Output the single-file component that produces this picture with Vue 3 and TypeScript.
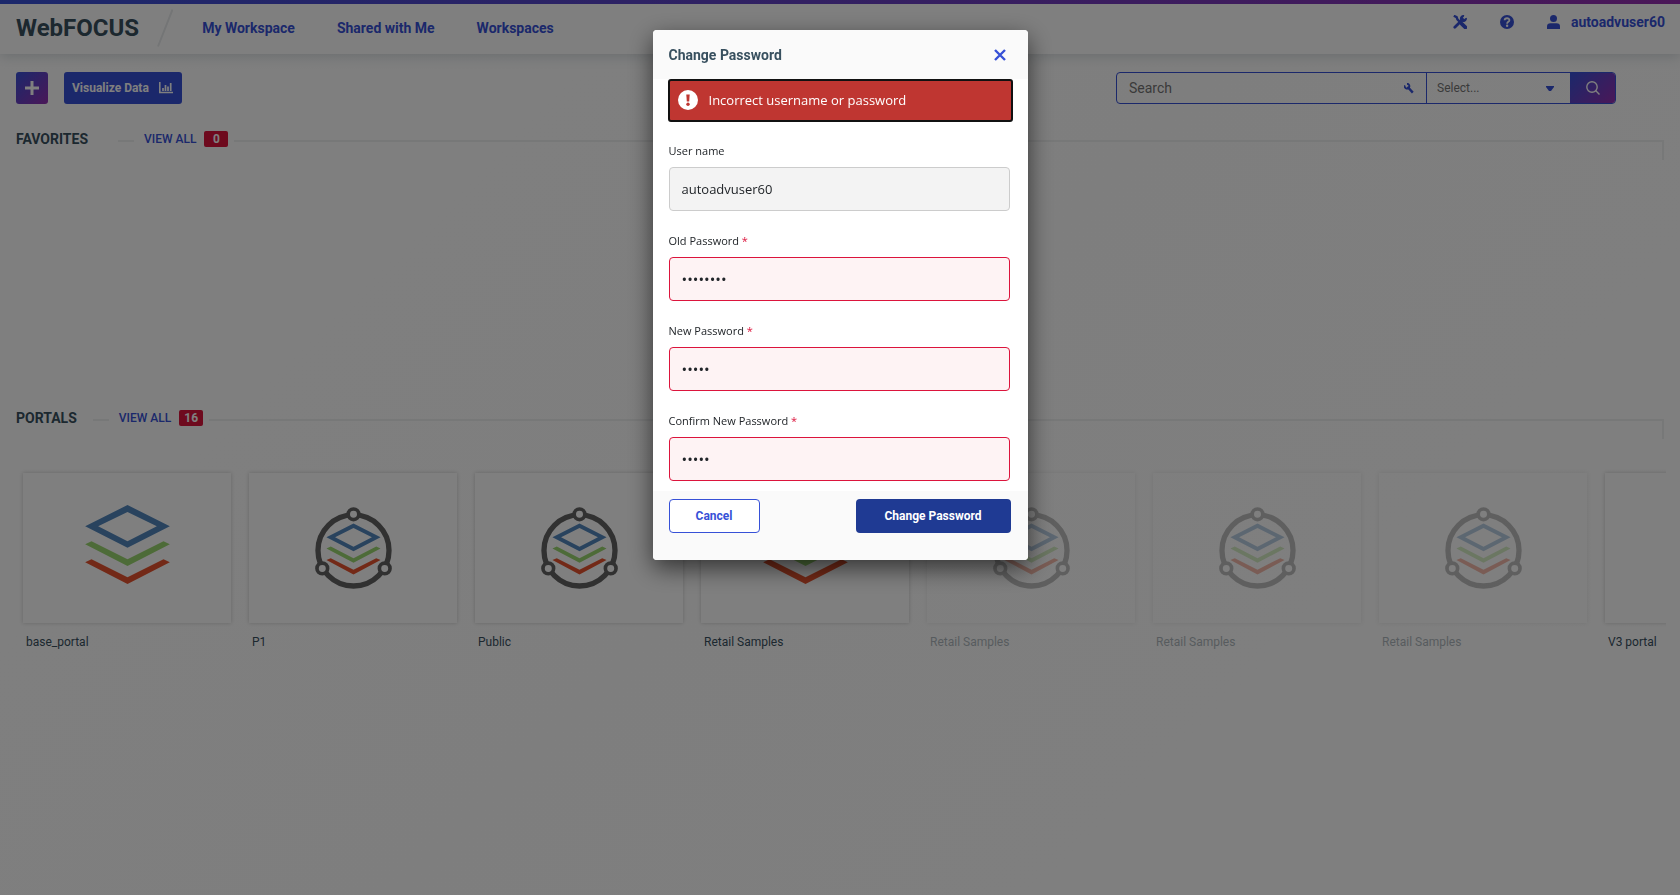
<script setup lang="ts">
import { ref } from 'vue'

interface Portal { name: string; kind: 'layers' | 'ring' | 'none'; dim?: boolean }

const navLinks = ['My Workspace', 'Shared with Me', 'Workspaces']
const portals: Portal[] = [
  { name: 'base_portal', kind: 'layers' },
  { name: 'P1', kind: 'ring' },
  { name: 'Public', kind: 'ring' },
  { name: 'Retail Samples', kind: 'layers' },
  { name: 'Retail Samples', kind: 'ring', dim: true },
  { name: 'Retail Samples', kind: 'ring', dim: true },
  { name: 'Retail Samples', kind: 'ring', dim: true },
  { name: 'V3 portal', kind: 'none' },
]
const userName = ref('autoadvuser60')
const passwords = ref([
  { id: 'old-password', label: 'Old Password', value: 'abcdefgh' },
  { id: 'new-password', label: 'New Password', value: 'abcde' },
  { id: 'confirm-password', label: 'Confirm New Password', value: 'abcde' },
])
</script>

<template>
  <div class="page">
    <header class="header">
      <h1 class="brand">WebFOCUS</h1>
      <svg class="slash" width="16" height="38" viewBox="0 0 16 38"><path d="M1 37.500L15.500 .5" stroke="#e8ebec" stroke-width="2" fill="none" /></svg>
      <nav class="nav">
        <a v-for="link in navLinks" :key="link" href="#">{{ link }}</a>
      </nav>
      <div class="account">
        <button class="plain" aria-label="Settings">
          <svg width="14" height="14" viewBox="0 0 14 14" fill="none" stroke="currentColor">
            <path d="M.8 .8L3.600 2.200L4.400 4.400L6.400 6.400" stroke-width="2.400" />
            <path d="M8.800 8.800L12.400 12.400" stroke-width="3.800" stroke-linecap="round" />
            <path d="M1.800 12.200L9.600 4.400" stroke-width="2.800" stroke-linecap="round" />
            <path d="M13.300 3.500A2.900 2.900 0 1 1 10.500 .7L9.700 3L11 4.300Z" stroke-width="1.200" fill="currentColor" />
            <path d="M13.500 .5L10.600 3.400" stroke="#fff" stroke-width="1.600" />
          </svg>
        </button>
        <button class="plain" aria-label="Help">
          <svg width="14" height="14" viewBox="0 0 14 14">
            <circle cx="7" cy="7" r="7" fill="currentColor" />
            <path d="M4.600 5.300C4.700 2.500 9.500 2.600 9.400 5.200C9.400 6.900 7.100 6.800 7.100 8.700" fill="none" stroke="#fff" stroke-width="1.800" />
            <circle cx="7.100" cy="10.800" r="1.200" fill="#fff" />
          </svg>
        </button>
        <button class="plain user">
          <svg width="13" height="14" viewBox="0 0 13 14" fill="currentColor"><circle cx="6.500" cy="3.500" r="3.500" /><path d="M0 14V11.500Q0 8.300 3.500 8.300H9.500Q13 8.300 13 11.500V14Z" /></svg>
          <span>autoadvuser60</span>
        </button>
      </div>
    </header>

    <main class="main">
      <div class="toolbar">
        <button class="add" aria-label="Add">
          <svg width="14" height="14" viewBox="0 0 14 14"><path d="M7 0V14M0 7H14" stroke="#fff" stroke-width="3" /></svg>
        </button>
        <button class="visualize">
          Visualize Data
          <svg width="14" height="12" viewBox="0 0 14 12" fill="none" stroke="#fff"><path d="M.8 0V10.500H14" stroke-width="1.600" /><path d="M4 9V6M6.500 9V3M9 9V4.500M11.700 9V1" stroke-width="1.700" /></svg>
        </button>
        <form class="search" role="search" @submit.prevent>
          <label class="query">
            <input type="text" placeholder="Search" aria-label="Search" />
            <svg width="10" height="11" viewBox="0 0 10 11"><path d="M3.500 3.800L8.800 9.600" stroke="#3751d7" stroke-width="2.400" fill="none" /><path d="M.8 2.300A2.400 2.400 0 1 0 3 .8" stroke="#3751d7" stroke-width="1.800" fill="none" /></svg>
          </label>
          <label class="scope">
            <select aria-label="Search scope"><option>Select...</option></select>
            <svg width="8" height="5" viewBox="0 0 8 5"><path d="M0 0H8V1L5 5H3L0 1Z" fill="#3751d7" /></svg>
          </label>
          <button class="go" aria-label="Run search">
            <svg width="14" height="14" viewBox="0 0 14 14" fill="none" stroke="#fff" stroke-width="1.400"><circle cx="6" cy="6" r="5.200" /><path d="M9.600 9.600L13.500 13.500" /></svg>
          </button>
        </form>
      </div>

      <section class="favorites">
        <div class="heading">
          <h2>FAVORITES</h2><i class="dash"></i><a href="#">VIEW ALL</a><span class="badge">0</span><i class="rule"></i>
        </div>
      </section>

      <section class="portals">
        <div class="heading">
          <h2>PORTALS</h2><i class="dash"></i><a href="#">VIEW ALL</a><span class="badge">16</span><i class="rule"></i>
        </div>
        <ul class="tiles">
          <li v-for="(p, i) in portals" :key="i" :class="{ dim: p.dim }">
            <div class="tile" :class="p.kind">
              <svg v-if="p.kind === 'layers'" width="85" height="79" viewBox="0 0 254 237">
                <path d="M0 64L127 0L254 64L127 128ZM39 64L127 109L215 64L127 21Z" fill="#5387bd" fill-rule="evenodd" />
                <path d="M0 118L19 109L127 163L235 109L254 118L127 183Z" fill="#9bd770" />
                <path d="M0 172L19 163L127 217L235 163L254 172L127 237Z" fill="#e6532e" />
              </svg>
              <svg v-else-if="p.kind === 'ring'" width="77" height="82" viewBox="0 0 231 247">
                <circle cx="115.500" cy="131" r="107" fill="none" stroke="#636363" stroke-width="16" />
                <g fill="#fff" stroke="#636363" stroke-width="11"><circle cx="115.500" cy="22" r="16" /><circle cx="21.500" cy="185" r="16" /><circle cx="209.500" cy="185" r="16" /></g>
                <path d="M34 91L115.500 50L197 91L115.500 133ZM60 91L115.500 120L171 91L115.500 63Z" fill="#5387bd" fill-rule="evenodd" />
                <path d="M34 125L47 119L115.500 154L184 119L197 125L115.500 168Z" fill="#9bd770" />
                <path d="M34 160L47 154L115.500 189L184 154L197 160L115.500 203Z" fill="#e6532e" />
              </svg>
            </div>
            <span>{{ p.name }}</span>
          </li>
        </ul>
      </section>
    </main>

    <div class="overlay">
      <form class="dialog" role="dialog" aria-labelledby="dialog-title" @submit.prevent>
        <div class="dialog-head">
          <h2 id="dialog-title">Change Password</h2>
          <button type="button" class="plain" aria-label="Close">
            <svg width="12" height="12" viewBox="0 0 12 12"><path d="M1 1L11 11M11 1L1 11" stroke="#3751d7" stroke-width="2.400" /></svg>
          </button>
        </div>
        <div class="dialog-body">
          <div class="alert" role="alert">
            <svg width="20" height="20" viewBox="0 0 20 20"><circle cx="10" cy="10" r="10" fill="#fff" /><path d="M8.300 4.500H11.700L11.200 11.500H8.800Z" fill="#bf3631" /><circle cx="10" cy="14.200" r="1.700" fill="#bf3631" /></svg>
            Incorrect username or password
          </div>
          <div class="field">
            <label for="user-name">User name</label>
            <input id="user-name" v-model="userName" type="text" readonly />
          </div>
          <div v-for="f in passwords" :key="f.id" class="field invalid">
            <label :for="f.id">{{ f.label }} <span>*</span></label>
            <input :id="f.id" v-model="f.value" type="password" />
          </div>
        </div>
        <div class="dialog-foot">
          <button type="button" class="cancel">Cancel</button>
          <button class="submit">Change Password</button>
        </div>
      </form>
    </div>
  </div>
</template>

<style>
body { margin: 0; }
</style>

<style scoped>
* { box-sizing: border-box; }
.page { min-height: 100vh; font-family: Roboto, sans-serif; color: #38505f; background: linear-gradient(135deg, #fff 0%, #fdfdfd 50%, #fff 100%); }
button, input, select { font-family: inherit; }
h1, h2 { margin: 0; }
a { color: #3751d7; text-decoration: none; }
svg { display: block; flex: none; }
.plain { border: 0; padding: 0; background: none; color: #3751d7; display: flex; align-items: center; }

.header { height: 54px; padding: 0 15px 2px 16px; border-top: 4px solid; border-image: linear-gradient(90deg, #3751d7, #952fb0) 1; display: flex; align-items: center; background: #fff; box-shadow: 0 2px 12px rgba(56, 80, 95, .22); }
.brand { font-size: 24px; line-height: 32px; font-weight: 700; color: #38505f; }
.slash { margin-left: 18px; }
.nav { display: flex; gap: 42px; margin-left: 29px; font-size: 14px; line-height: 20px; font-weight: 700; }
.account { margin-left: auto; align-self: flex-start; display: flex; align-items: center; gap: 33px; padding-top: 8px; }
.user { gap: 11px; font-size: 14px; line-height: 20px; font-weight: 700; }

.main { padding: 18px 14px 0 16px; }
.toolbar { display: flex; gap: 16px; }
.add { width: 32px; height: 32px; border: 0; border-radius: 3px; padding: 0; display: flex; align-items: center; justify-content: center; background: linear-gradient(135deg, #3751d7, #952fb0); }
.visualize { height: 32px; border: 0; border-radius: 3px; padding: 0 9px 0 8px; display: flex; align-items: center; gap: 10px; background: #3751d7; color: #fff; font-size: 12px; font-weight: 700; }
.search { margin-left: auto; margin-right: 50px; width: 500px; height: 32px; display: flex; border: 1px solid #3751d7; border-radius: 4px; overflow: hidden; }
.query { flex: 1; display: flex; align-items: center; padding: 0 12px; border-right: 1px solid #3751d7; }
.query input { flex: 1; min-width: 0; border: 0; padding: 0; background: none; font-size: 14px; outline: 0; }
.query input::placeholder { color: #757575; }
.scope { width: 143px; display: flex; align-items: center; padding: 0 16px 0 10px; }
.scope select { flex: 1; appearance: none; border: 0; padding: 0; background: none; color: #757575; font-size: 12px; }
.go { width: 45px; border: 0; display: flex; align-items: center; justify-content: center; background: linear-gradient(135deg, #3751d7, #952fb0); }

.favorites { height: 304px; padding-top: 25px; }
.heading { display: flex; align-items: center; height: 20px; padding-right: 2px; }
.heading h2 { font-size: 14px; line-height: 20px; font-weight: 700; }
.heading a { margin-left: 10px; font-size: 12px; line-height: 20px; font-weight: 500; }
.dash { width: 16px; height: 2px; margin: 4px 0 0 16px; background: #eff0f1; }
.favorites .dash { margin-left: 30px; }
.badge { min-width: 24px; height: 16px; margin-left: 8px; border-radius: 2px; background: #dc143c; color: #fff; font-size: 12px; line-height: 16px; font-weight: 700; text-align: center; }
.rule { flex: 1; align-self: flex-start; height: 20px; margin: 11px 0 0 6px; border: solid #eff0f1; border-width: 2px 2px 0 0; }
.tiles { list-style: none; margin: 0; padding: 45px 0 20px 7px; display: flex; gap: 18px; overflow: hidden; }
.tiles li { flex: none; width: 208px; }
.tile { height: 150px; display: flex; align-items: center; justify-content: center; background: #fff; box-shadow: 0 0 4px rgba(0, 0, 0, .2); }
.tile.layers { padding-bottom: 8px; }
.tiles span { display: block; margin: 9px 0 0 3px; font-size: 12px; line-height: 20px; }
.dim { opacity: .4; }

.overlay { position: fixed; inset: 0; padding-top: 30px; background: rgba(0, 0, 0, .5); display: flex; align-items: flex-start; justify-content: center; }
.dialog { width: 375px; border-radius: 4px; overflow: hidden; background: #fff; box-shadow: 0 8px 24px rgba(0, 0, 0, .6); }
.dialog-head { height: 49px; padding: 0 22px 0 16px; display: flex; align-items: center; justify-content: space-between; background: #fafafa; }
.dialog-head h2 { font-size: 14px; line-height: 20px; }
.dialog-body { padding: 0 15px 10px; font-family: "Open Sans", sans-serif; color: #212529; }
.alert { height: 43px; padding: 0 8px 2px; display: flex; align-items: center; gap: 11px; border: 2px solid #111; border-radius: 3px; background: #bf3631; color: #fff; font-size: 13px; line-height: 20px; }
.field { padding: 0 3px 0 1px; margin-top: 19px; }
.field label { display: block; font-size: 11px; line-height: 20px; }
.field label span { color: #dc143c; }
.field input { display: block; width: 100%; height: 44px; margin-top: 6px; padding: 0 12px; border: 1px solid #ccc; border-radius: 4px; background: #f3f3f3; color: #212529; font-size: 13px; }
.field.invalid { margin-top: 20px; }
.field.invalid input { border-color: #dc143c; background: #fef3f4; font-size: 15px; }
.dialog-foot { height: 69px; padding: 8px 17px 0 16px; display: flex; align-items: flex-start; justify-content: space-between; background: #fafafa; }
.dialog-foot button { height: 34px; border-radius: 4px; font-size: 12px; font-weight: 700; }
.cancel { width: 91px; border: 1px solid #3751d7; background: #fff; color: #3751d7; }
.submit { width: 155px; border: 0; background: #1f3a93; color: #fff; }
</style>
